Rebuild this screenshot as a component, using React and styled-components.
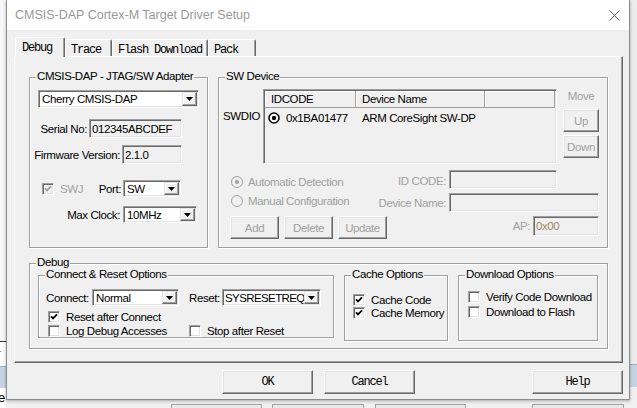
import React from "react";
import styled, { createGlobalStyle } from "styled-components";

const UI_FONT = `"Liberation Sans", Arial, sans-serif`;
const MONO_FONT = `"Liberation Mono", "DejaVu Sans Mono", monospace`;
const FACE = "#f0f0f0";
const SHADOW = "#a0a0a0";
const DARK = "#696969";
const LIGHT = "#e3e3e3";
const DIM = "#a0a0a0";

const GlobalStyle = createGlobalStyle`
  html, body { margin: 0; padding: 0; }
  body {
    width: 637px;
    height: 408px;
    overflow: hidden;
    font-family: ${UI_FONT};
    font-size: 11.5px;
    letter-spacing: -0.4px;
    line-height: 14px;
    color: #000;
  }
  *, *::before, *::after { box-sizing: border-box; }
`;

const Desktop = styled.div`
  position: relative;
  width: 637px;
  height: 408px;
  overflow: hidden;
  background: #f7f7f7;
`;

// pieces of the windows behind the dialog
const Scrap = styled.div`
  position: absolute;
  left: ${(p) => p.$x}px;
  top: ${(p) => p.$y}px;
  width: ${(p) => p.$w}px;
  height: ${(p) => p.$h}px;
  background: ${(p) => p.$bg || "transparent"};
  border-top: ${(p) => (p.$line ? `1px solid ${p.$line}` : "none")};
  color: ${(p) => p.$color || "#000"};
  font: 13px "Liberation Sans", Arial, sans-serif;
  line-height: ${(p) => p.$h}px;
  text-indent: ${(p) => p.$indent || 0}px;
  overflow: hidden;
`;

const BackButton = styled.div`
  position: absolute;
  left: ${(p) => p.$x}px;
  top: 404px;
  width: ${(p) => p.$w}px;
  height: 12px;
  background: #e9e9e9;
  border: 1px solid #a3a3a3;
`;

const Dialog = styled.div`
  position: relative;
  z-index: 1;
  margin-left: 6px;
  width: 624px;
  height: 400px;
  background: ${FACE};
  border: 1px solid #8c8c8c;
  border-top: none;
  box-shadow: 0 1px 3px rgba(0, 0, 0, 0.3);
  display: flex;
  flex-direction: column;
`;

const TitleBar = styled.div`
  flex: none;
  height: 30px;
  background: #fff;
  display: flex;
  align-items: center;
  justify-content: space-between;
  padding: 0 9px 0 8px;
  font-size: 12.5px;
  letter-spacing: 0;
  color: #999;
`;

const DialogBody = styled.div`
  flex: 1;
  padding: 7px 6px 0 7px;
`;

const TabStrip = styled.div`
  position: relative;
  z-index: 1;
  display: flex;
  align-items: flex-end;
  height: 20px;
  padding-left: 1px;
  margin-bottom: -1px;
`;

const Tab = styled.div`
  width: ${(p) => p.$w}px;
  height: ${(p) => (p.$active ? 20 : 17)}px;
  margin-bottom: ${(p) => (p.$active ? 0 : 1)}px;
  padding: 3px 0 0 ${(p) => (p.$active ? 6 : 5)}px;
  background: ${FACE};
  border-top: 1px solid #fff;
  border-left: 1px solid #fff;
  border-right: 1px solid ${DARK};
  box-shadow: inset -1px 0 0 ${SHADOW};
  border-radius: 2px 2px 0 0;
  font-family: ${MONO_FONT};
  font-size: 12px;
  letter-spacing: -1.2px;
  line-height: 14px;
  white-space: nowrap;
`;

const TabPanel = styled.div`
  width: 609px;
  height: 307px;
  border-top: 1px solid #fff;
  border-left: 1px solid #fff;
  border-right: 1px solid ${DARK};
  border-bottom: 1px solid ${DARK};
  box-shadow: inset -1px -1px 0 ${SHADOW};
  padding: 20px 0 0 14px;
`;

const TopRow = styled.div`
  display: flex;
  gap: 10px;
`;

const Group = styled.div`
  position: relative;
  flex: none;
  width: ${(p) => p.$w}px;
  height: ${(p) => p.$h}px;
  margin-top: ${(p) => p.$mt || 0}px;
  border: 1px solid ${SHADOW};
  box-shadow: 1px 1px 0 #fff, inset 1px 1px 0 #fff;
`;

const Legend = styled.span`
  position: absolute;
  top: -8px;
  left: 6px;
  padding: 0 1px;
  background: ${FACE};
  line-height: 13px;
  white-space: nowrap;
`;

const Stack = styled.div`
  display: flex;
  flex-direction: column;
  padding-top: ${(p) => p.$pt || 0}px;
  padding-left: ${(p) => p.$pl || 0}px;
`;

const Row = styled.div`
  flex: none;
  display: flex;
  align-items: ${(p) => p.$align || "center"};
  height: ${(p) => p.$h}px;
  margin-top: ${(p) => p.$mt || 0}px;
  padding-left: ${(p) => p.$pl || 0}px;
`;

const FieldLabel = styled.div`
  flex: none;
  display: flex;
  justify-content: ${(p) => (p.$left ? "flex-start" : "flex-end")};
  width: ${(p) => p.$w}px;
  margin-left: ${(p) => p.$ml || 0}px;
  margin-right: ${(p) => p.$gap || 0}px;
  padding-top: ${(p) => p.$pt || 0}px;
  white-space: nowrap;
  color: ${(p) => (p.$dim ? DIM : "#000")};
`;

const Sunken = styled.div`
  flex: none;
  display: flex;
  align-items: center;
  width: ${(p) => p.$w}px;
  height: ${(p) => p.$h}px;
  background: ${(p) => p.$bg || FACE};
  border: 1px solid;
  border-color: ${SHADOW} #fff #fff ${SHADOW};
  box-shadow: inset 1px 1px 0 ${DARK}, inset -1px -1px 0 ${LIGHT};
  padding: 1px 1px 1px 2px;
  color: ${(p) => p.$color || "#000"};
  white-space: nowrap;
  overflow: hidden;
`;

const ComboText = styled.span`
  flex: 1;
  min-width: 0;
  padding-left: ${(p) => (p.$tight ? 0 : 1)}px;
  letter-spacing: ${(p) => (p.$tight ? "-0.6px" : "inherit")};
  white-space: nowrap;
  overflow: hidden;
`;

const ComboButton = styled.span`
  flex: none;
  width: 15px;
  height: 100%;
  display: flex;
  align-items: center;
  justify-content: center;
  background: ${FACE};
  border: 1px solid;
  border-color: ${LIGHT} ${DARK} ${DARK} ${LIGHT};
  box-shadow: inset -1px -1px 0 ${SHADOW}, inset 1px 1px 0 #fff;
`;

const PushButton = styled.div`
  flex: none;
  display: flex;
  align-items: center;
  justify-content: center;
  width: ${(p) => p.$w}px;
  height: ${(p) => p.$h}px;
  margin-left: ${(p) => (p.$auto ? "auto" : `${p.$ml || 0}px`)};
  margin-top: ${(p) => p.$mt || 0}px;
  background: ${FACE};
  border: 1px solid;
  border-color: #fff ${DARK} ${DARK} #fff;
  box-shadow: inset -1px -1px 0 ${SHADOW}, inset 1px 1px 0 ${LIGHT};
  color: ${(p) => (p.$dim ? DIM : "#000")};
  font-family: ${(p) => (p.$mono ? MONO_FONT : UI_FONT)};
  font-size: ${(p) => (p.$mono ? "12px" : "11.5px")};
  letter-spacing: ${(p) => (p.$mono ? "-1.2px" : "-0.4px")};
`;

const CheckItem = styled.div`
  flex: none;
  display: flex;
  align-items: center;
  width: ${(p) => (p.$w ? `${p.$w}px` : "auto")};
  color: ${(p) => (p.$dim ? DIM : "#000")};
  white-space: nowrap;
`;

const CheckBox = styled.span`
  flex: none;
  width: 12px;
  height: 12px;
  display: flex;
  align-items: center;
  justify-content: center;
  background: ${(p) => (p.$dim ? FACE : "#fff")};
  border: 1px solid;
  border-color: ${SHADOW} #fff #fff ${SHADOW};
  box-shadow: inset 1px 1px 0 ${DARK}, inset -1px -1px 0 ${LIGHT};
`;

const ItemText = styled.span`
  margin-left: ${(p) => p.$gap || 6}px;
`;

const SwBody = styled.div`
  padding: 11px 0 0 4px;
`;

const ListArea = styled.div`
  display: flex;
  height: 75px;
`;

const SideLabel = styled.div`
  width: 40px;
  padding-top: 20px;
`;

const ListView = styled.div`
  width: 294px;
  height: 75px;
  background: ${FACE};
  border: 1px solid;
  border-color: ${SHADOW} #fff #fff ${SHADOW};
  box-shadow: inset 1px 1px 0 ${DARK}, inset -1px -1px 0 ${LIGHT};
  padding: 1px;
`;

const ListHeader = styled.div`
  display: flex;
  height: 17px;
`;

const HeadCell = styled.div`
  display: flex;
  align-items: center;
  width: ${(p) => (p.$w ? `${p.$w}px` : "auto")};
  flex: ${(p) => (p.$w ? "none" : 1)};
  padding-left: 6px;
  border-right: 1px solid ${SHADOW};
  border-bottom: 1px solid ${SHADOW};
  box-shadow: inset 1px 1px 0 #fff;
`;

const ListRow = styled.div`
  display: flex;
  align-items: center;
  height: 20px;
`;

const Cell = styled.div`
  display: flex;
  align-items: center;
  width: ${(p) => p.$w}px;
  padding-left: ${(p) => p.$pl}px;
  white-space: nowrap;
`;

const MoveColumn = styled.div`
  display: flex;
  flex-direction: column;
  width: 36px;
  margin-left: 6px;
`;

const MoveLabel = styled.div`
  text-align: center;
  color: ${DIM};
`;

const FormArea = styled.div`
  padding: 6px 0 0 7px;
`;

const LeftCell = styled.div`
  flex: none;
  display: flex;
  width: 160px;
  padding-top: ${(p) => p.$pt || 0}px;
`;

const DebugBody = styled.div`
  display: flex;
  gap: 10px;
  padding: 11px 0 0 8px;
`;

const ButtonBar = styled.div`
  display: flex;
  width: 609px;
  height: 24px;
  margin-top: 7px;
`;

const Arrow = () => (
  <svg width="7" height="4" viewBox="0 0 7 4">
    <path d="M0 0h7L3.5 4z" fill="#000" />
  </svg>
);

const CloseIcon = () => (
  <svg width="11" height="11" viewBox="0 0 11 11">
    <path d="M0.5 0.5L10.5 10.5M10.5 0.5L0.5 10.5" stroke="#555" strokeWidth="1" />
  </svg>
);

const CheckMark = ({ color }) => (
  <svg width="8" height="8" viewBox="0 0 8 8">
    <path d="M1 3.4L3 5.4L7 1.4" fill="none" stroke={color} strokeWidth="1.8" />
  </svg>
);

const RadioMark = ({ on }) => (
  <svg width="12" height="12" viewBox="0 0 12 12">
    <circle cx="6" cy="6" r="5.5" fill={FACE} stroke={DIM} />
    {on && <circle cx="6" cy="6" r="2" fill={DIM} />}
  </svg>
);

const StateIcon = () => (
  <svg width="12" height="12" viewBox="0 0 12 12">
    <circle cx="6" cy="6" r="5" fill="#fff" stroke="#000" strokeWidth="1.6" />
    <circle cx="6" cy="6" r="2.2" fill="#000" />
  </svg>
);

const Combo = ({ w, h = 17, tight, children }) => (
  <Sunken $w={w} $h={h} $bg="#fff">
    <ComboText $tight={tight}>{children}</ComboText>
    <ComboButton>
      <Arrow />
    </ComboButton>
  </Sunken>
);

const Check = ({ checked, dim, w, children }) => (
  <CheckItem $w={w} $dim={dim}>
    <CheckBox $dim={dim}>{checked && <CheckMark color={dim ? DIM : "#000"} />}</CheckBox>
    <ItemText>{children}</ItemText>
  </CheckItem>
);

const Radio = ({ on, children }) => (
  <CheckItem $dim style={{ marginLeft: 1 }}>
    <RadioMark on={on} />
    <ItemText $gap={5}>{children}</ItemText>
  </CheckItem>
);

const TABS = [
  { label: "Debug", w: 50, active: true },
  { label: "Trace", w: 47 },
  { label: "Flash Download", w: 96 },
  { label: "Pack", w: 48 },
];

export default function App() {
  return (
    <>
      <GlobalStyle />
      <Desktop>
        <Scrap $x={0} $y={341} $w={6} $h={1} $bg="#3c3c3c" />
        <Scrap $x={0} $y={342} $w={6} $h={24} $bg="#fff" $color="#b07a96" $indent={-3}>
          r
        </Scrap>
        <Scrap $x={0} $y={366} $w={6} $h={22} $bg="#c6d3e3" $line="#9fb0c4" />
        <Scrap $x={0} $y={388} $w={6} $h={20} $bg="#fff" $indent={-2}>
          e
        </Scrap>
        <Scrap $x={630} $y={0} $w={7} $h={364} $bg="#ececec" />
        <Scrap $x={630} $y={364} $w={7} $h={23} $bg="#c6d3e3" $line="#9fb0c4" />
        <Scrap $x={630} $y={387} $w={7} $h={21} $bg="#f0f0f0" />
        <Scrap $x={6} $y={400} $w={624} $h={8} $bg="#f0f0f0" />
        <BackButton $x={171} $w={91} />
        <BackButton $x={272} $w={92} />
        <BackButton $x={375} $w={91} />
        <BackButton $x={532} $w={92} />

        <Dialog>
          <TitleBar>
            <span>CMSIS-DAP Cortex-M Target Driver Setup</span>
            <CloseIcon />
          </TitleBar>
          <DialogBody>
            <TabStrip>
              {TABS.map((t) => (
                <Tab key={t.label} $w={t.w} $active={t.active}>
                  {t.label}
                </Tab>
              ))}
            </TabStrip>
            <TabPanel>
              <TopRow>
                <Group $w={179} $h={171}>
                  <Legend>CMSIS-DAP - JTAG/SW Adapter</Legend>
                  <Stack $pt={12}>
                    <Row $h={18} $pl={8}>
                      <Combo w={161} h={18}>
                        Cherry CMSIS-DAP
                      </Combo>
                    </Row>
                    <Row $h={19} $mt={11}>
                      <FieldLabel $w={57} $gap={2}>
                        Serial No:
                      </FieldLabel>
                      <Sunken $w={93} $h={19}>
                        012345ABCDEF
                      </Sunken>
                    </Row>
                    <Row $h={19} $mt={7}>
                      <FieldLabel $w={90} $gap={2}>
                        Firmware Version:
                      </FieldLabel>
                      <Sunken $w={60} $h={19}>
                        2.1.0
                      </Sunken>
                    </Row>
                    <Row $h={17} $mt={16} $pl={12}>
                      <Check checked dim w={55}>
                        SWJ
                      </Check>
                      <FieldLabel $w={24} $gap={2}>
                        Port:
                      </FieldLabel>
                      <Combo w={58}>SW</Combo>
                    </Row>
                    <Row $h={17} $mt={9}>
                      <FieldLabel $w={90} $gap={3}>
                        Max Clock:
                      </FieldLabel>
                      <Combo w={74}>10MHz</Combo>
                    </Row>
                  </Stack>
                </Group>

                <Group $w={390} $h={171}>
                  <Legend>SW Device</Legend>
                  <SwBody>
                    <ListArea>
                      <SideLabel>SWDIO</SideLabel>
                      <ListView>
                        <ListHeader>
                          <HeadCell $w={91}>IDCODE</HeadCell>
                          <HeadCell $w={129}>Device Name</HeadCell>
                          <HeadCell />
                        </ListHeader>
                        <ListRow>
                          <Cell $w={91} $pl={3}>
                            <StateIcon />
                            <ItemText $gap={6}>0x1BA01477</ItemText>
                          </Cell>
                          <Cell $w={129} $pl={6}>
                            ARM CoreSight SW-DP
                          </Cell>
                        </ListRow>
                      </ListView>
                      <MoveColumn>
                        <MoveLabel>Move</MoveLabel>
                        <PushButton $w={36} $h={23} $mt={6} $dim>
                          Up
                        </PushButton>
                        <PushButton $w={36} $h={23} $mt={3} $dim>
                          Down
                        </PushButton>
                      </MoveColumn>
                    </ListArea>
                    <FormArea>
                      <Row $h={19} $align="flex-start">
                        <LeftCell $pt={5}>
                          <Radio on>Automatic Detection</Radio>
                        </LeftCell>
                        <FieldLabel $w={56} $gap={3} $pt={4} $dim>
                          ID CODE:
                        </FieldLabel>
                        <Sunken $w={108} $h={19} />
                      </Row>
                      <Row $h={19} $mt={4} $align="flex-start">
                        <LeftCell $pt={1}>
                          <Radio>Manual Configuration</Radio>
                        </LeftCell>
                        <FieldLabel $w={56} $gap={3} $pt={3} $dim>
                          Device Name:
                        </FieldLabel>
                        <Sunken $w={150} $h={19} />
                      </Row>
                      <Row $h={23} $mt={4} $align="flex-start">
                        <LeftCell>
                          <PushButton $w={49} $h={23} $dim>
                            Add
                          </PushButton>
                          <PushButton $w={49} $h={23} $ml={5} $dim>
                            Delete
                          </PushButton>
                          <PushButton $w={49} $h={23} $ml={5} $dim>
                            Update
                          </PushButton>
                        </LeftCell>
                        <FieldLabel $w={140} $gap={3} $pt={3} $dim>
                          AP:
                        </FieldLabel>
                        <Sunken $w={66} $h={20} $color="#a58a68">
                          0x00
                        </Sunken>
                      </Row>
                    </FormArea>
                  </SwBody>
                </Group>
              </TopRow>

              <Group $w={579} $h={86} $mt={15}>
                <Legend>Debug</Legend>
                <DebugBody>
                  <Group $w={296} $h={63}>
                    <Legend>Connect &amp; Reset Options</Legend>
                    <Stack $pt={13}>
                      <Row $h={17} $pl={7}>
                        <FieldLabel $w={46} $left>
                          Connect:
                        </FieldLabel>
                        <Combo w={87}>Normal</Combo>
                        <FieldLabel $w={33} $ml={10} $left>
                          Reset:
                        </FieldLabel>
                        <Combo w={99} tight>
                          SYSRESETREQ
                        </Combo>
                      </Row>
                      <Row $h={13} $mt={4} $pl={9}>
                        <Check checked w={141}>
                          Reset after Connect
                        </Check>
                      </Row>
                      <Row $h={13} $mt={1} $pl={9}>
                        <Check w={141}>Log Debug Accesses</Check>
                        <Check>Stop after Reset</Check>
                      </Row>
                    </Stack>
                  </Group>
                  <Group $w={104} $h={66}>
                    <Legend>Cache Options</Legend>
                    <Stack $pt={17} $pl={8}>
                      <Row $h={13}>
                        <Check checked>Cache Code</Check>
                      </Row>
                      <Row $h={13}>
                        <Check checked>Cache Memory</Check>
                      </Row>
                    </Stack>
                  </Group>
                  <Group $w={140} $h={66}>
                    <Legend>Download Options</Legend>
                    <Stack $pt={14} $pl={9}>
                      <Row $h={13}>
                        <Check>Verify Code Download</Check>
                      </Row>
                      <Row $h={13} $mt={2}>
                        <Check>Download to Flash</Check>
                      </Row>
                    </Stack>
                  </Group>
                </DebugBody>
              </Group>
            </TabPanel>
            <ButtonBar>
              <PushButton $w={91} $h={24} $ml={208} $mono>
                OK
              </PushButton>
              <PushButton $w={91} $h={24} $ml={11} $mono>
                Cancel
              </PushButton>
              <PushButton $w={91} $h={24} $auto $mono>
                Help
              </PushButton>
            </ButtonBar>
          </DialogBody>
        </Dialog>
      </Desktop>
    </>
  );
}
